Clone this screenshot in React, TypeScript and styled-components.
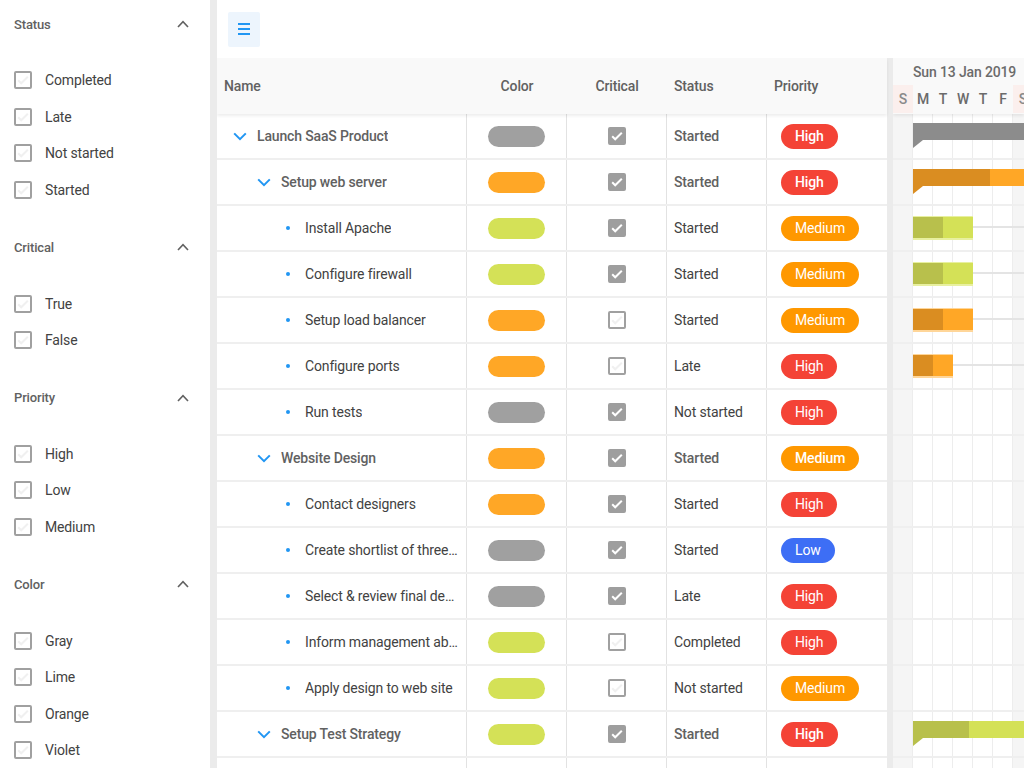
import React from 'react';
import styled, { createGlobalStyle, css } from 'styled-components';

const GlobalStyle = createGlobalStyle`
  html, body { margin: 0; padding: 0; height: 100%; }
  body {
    font-family: Roboto, "Noto Sans", "Liberation Sans", Arial, sans-serif;
    background: #ffffff;
    color: #424242;
    letter-spacing: -0.15px;
    -webkit-font-smoothing: antialiased;
  }
  * { box-sizing: border-box; }
`;

type ColorName = 'gray' | 'orange' | 'lime';
type Priority = 'High' | 'Medium' | 'Low';

const PILL: Record<ColorName, string> = { gray: '#a0a0a0', orange: '#ffa726', lime: '#d4e157' };
const BAR_LIGHT: Record<ColorName, string> = { gray: '#8c8c8c', orange: '#ffa726', lime: '#d4e157' };
const BAR_DARK: Record<ColorName, string> = { gray: '#8c8c8c', orange: '#da8d21', lime: '#b8c04c' };
const BAR_EDGE: Record<ColorName, string> = { gray: '#8c8c8c', orange: '#ffd699', lime: '#e8f0a0' };
const PRIORITY: Record<Priority, string> = { High: '#f44336', Medium: '#ff9800', Low: '#3d6ef5' };

const DAY = 20;

/* ---------- layout ---------- */
const Layout = styled.div`
  display: flex;
  width: 100vw;
  height: 100vh;
  overflow: hidden;
`;

const Sidebar = styled.aside`
  width: 210px;
  flex: none;
  background: #fff;
  overflow: hidden;
`;

const Divider = styled.div<{ $w: number }>`
  width: ${p => p.$w}px;
  flex: none;
  background: #ebebeb;
`;

const Main = styled.main`
  flex: 1;
  min-width: 0;
  display: flex;
  flex-direction: column;
  overflow: hidden;
`;

const Toolbar = styled.div`
  height: 58px;
  flex: none;
  display: flex;
  align-items: center;
  padding-left: 11px;
  background: #fff;
`;

const MenuButton = styled.button`
  width: 32px;
  height: 35px;
  border: 0;
  padding: 0;
  border-radius: 2px;
  background: #edf5fd;
  display: flex;
  align-items: center;
  justify-content: center;
`;

const Workspace = styled.div`
  flex: 1;
  min-height: 0;
  display: flex;
`;

const Table = styled.div`
  width: 670px;
  flex: none;
  display: flex;
  flex-direction: column;
`;

const Gantt = styled.div`
  flex: 1;
  min-width: 0;
  overflow: hidden;
  display: flex;
  flex-direction: column;
`;

/* ---------- sidebar ---------- */
const Section = styled.section`
  padding-bottom: 15px;
`;

const SectionHeader = styled.div`
  height: 48px;
  display: flex;
  align-items: center;
  justify-content: space-between;
  padding: 0 21px 0 14px;
  font-size: 13px;
  font-weight: 500;
  color: #616161;
`;

const OptionList = styled.div`
  padding-top: 14px;
`;

const Option = styled.label`
  height: 36.6px;
  display: flex;
  align-items: center;
  gap: 13px;
  padding-left: 14px;
  font-size: 14px;
  color: #424242;
`;

const Box = styled.span<{ $checked?: boolean }>`
  width: 18px;
  height: 18px;
  flex: none;
  border-radius: 2px;
  display: inline-flex;
  align-items: center;
  justify-content: center;
  ${p =>
    p.$checked
      ? css`background: #9e9e9e; border: 2px solid #9e9e9e;`
      : css`background: #fff; border: 2px solid #a0a0a0;`}
`;

/* ---------- table ---------- */
const columns = '250px 100px 100px 100px 120px';

const HeaderRow = styled.div`
  display: grid;
  grid-template-columns: ${columns};
  height: 56px;
  flex: none;
  background: #f9f9f9;
  box-shadow: 0 2px 3px rgba(0, 0, 0, 0.07);
  position: relative;
  z-index: 1;
`;

const HeaderCell = styled.div<{ $center?: boolean }>`
  display: flex;
  align-items: center;
  justify-content: ${p => (p.$center ? 'center' : 'flex-start')};
  padding-left: ${p => (p.$center ? 0 : 7)}px;
  font-size: 14px;
  font-weight: 500;
  color: #616161;
`;

const Row = styled.div`
  display: grid;
  grid-template-columns: ${columns};
  height: 46px;
  flex: none;
  border-bottom: 2px solid #efefef;
`;

const Cell = styled.div<{ $center?: boolean; $last?: boolean; $pad?: number; $bold?: boolean }>`
  display: flex;
  align-items: center;
  min-width: 0;
  justify-content: ${p => (p.$center ? 'center' : 'flex-start')};
  padding-left: ${p => p.$pad ?? 0}px;
  border-right: ${p => (p.$last ? '0' : '1px solid #e2e2e2')};
  font-size: 14px;
  font-weight: ${p => (p.$bold ? 500 : 400)};
  color: ${p => (p.$bold ? '#616161' : '#424242')};
`;

const NameCell = styled(Cell)<{ $level: number }>`
  padding-left: ${p => 16 + p.$level * 24}px;
  padding-right: 6px;
`;

const Toggle = styled.span`
  width: 24px;
  flex: none;
  display: flex;
  align-items: center;
`;

const Dot = styled.span`
  width: 4px;
  height: 4px;
  margin-left: 5px;
  border-radius: 50%;
  background: #2196f3;
`;

const NameText = styled.span`
  overflow: hidden;
  white-space: nowrap;
  text-overflow: ellipsis;
  min-width: 0;
`;

const ColorPill = styled.span<{ $color: ColorName }>`
  width: 57px;
  height: 21px;
  border-radius: 11px;
  background: ${p => PILL[p.$color]};
`;

const PriorityPill = styled.span<{ $priority: Priority; $bold?: boolean }>`
  height: 25px;
  padding: 0 14px;
  border-radius: 13px;
  display: inline-flex;
  align-items: center;
  background: ${p => PRIORITY[p.$priority]};
  color: #fff;
  font-size: 14px;
  font-weight: ${p => (p.$bold ? 500 : 400)};
`;

/* ---------- gantt ---------- */
const GanttHeader = styled.div`
  height: 56px;
  flex: none;
  background: #f9f9f9;
  box-shadow: 0 2px 3px rgba(0, 0, 0, 0.07);
  position: relative;
  z-index: 1;
  display: flex;
  flex-direction: column;
`;

const WeekLabel = styled.div`
  height: 27px;
  display: flex;
  align-items: center;
  padding-left: 20px;
  font-size: 14px;
  font-weight: 500;
  color: #6b6b6b;
  white-space: nowrap;
`;

const DayRow = styled.div`
  display: flex;
  height: 28px;
`;

const DayLabel = styled.div<{ $weekend?: boolean }>`
  width: ${DAY}px;
  flex: none;
  display: flex;
  align-items: center;
  justify-content: center;
  font-size: 14px;
  font-weight: 500;
  color: ${p => (p.$weekend ? '#8a8a8a' : '#6b6b6b')};
  background: ${p => (p.$weekend ? '#fbefed' : 'transparent')};
`;

const GanttRow = styled.div`
  position: relative;
  display: flex;
  height: 46px;
  flex: none;
  border-bottom: 2px solid #efefef;
`;

const DayCell = styled.div<{ $weekend?: boolean }>`
  width: ${DAY}px;
  flex: none;
  border-right: 1px solid #ededed;
  background: ${p => (p.$weekend ? '#f5f5f5' : '#fff')};
`;

const Bar = styled.div<{ $color: ColorName; $summary?: boolean }>`
  position: absolute;
  display: flex;
  top: ${p => (p.$summary ? 9 : 10)}px;
  height: ${p => (p.$summary ? 17 : 24)}px;
  background: ${p => BAR_LIGHT[p.$color]};
  ${p =>
    !p.$summary &&
    css`
      border-top: 1px solid ${BAR_EDGE[p.$color]};
      border-bottom: 2px solid ${BAR_EDGE[p.$color]};
    `}
  ${p =>
    p.$summary &&
    css`
      &::after {
        content: '';
        position: absolute;
        left: 0;
        top: 100%;
        width: 10px;
        height: 8px;
        background: ${BAR_DARK[p.$color]};
        clip-path: polygon(0 0, 100% 0, 0 100%);
      }
    `}
`;

const Progress = styled.div<{ $color: ColorName }>`
  height: 100%;
  flex: none;
  background: ${p => BAR_DARK[p.$color]};
`;

const Link = styled.div`
  position: absolute;
  top: 20px;
  right: 0;
  height: 2px;
  background: #e4e4e4;
`;

/* ---------- icons ---------- */
const Check = ({ color }: { color: string }) => (
  <svg width="14" height="14" viewBox="0 0 14 14">
    <path d="M2.2 7.3l3 3L11.8 3.7" fill="none" stroke={color} strokeWidth="2" />
  </svg>
);

const ChevronDown = () => (
  <svg width="14" height="9" viewBox="0 0 14 9">
    <path d="M1.2 1.4L7 7.2l5.8-5.8" fill="none" stroke="#2196f3" strokeWidth="2" />
  </svg>
);

const ChevronUp = () => (
  <svg width="12" height="8" viewBox="0 0 12 8">
    <path d="M1 7l5-5.3L11 7" fill="none" stroke="#616161" strokeWidth="1.6" />
  </svg>
);

const Hamburger = () => (
  <svg width="12" height="12" viewBox="0 0 12 12">
    <path d="M0 1h12M0 6h12M0 11h12" stroke="#2196f3" strokeWidth="2" />
  </svg>
);

const CheckBox = ({ checked }: { checked?: boolean }) => (
  <Box $checked={checked}>
    <Check color={checked ? '#ffffff' : '#f0f0f0'} />
  </Box>
);

/* ---------- data ---------- */
const filters: { title: string; options: string[] }[] = [
  { title: 'Status', options: ['Completed', 'Late', 'Not started', 'Started'] },
  { title: 'Critical', options: ['True', 'False'] },
  { title: 'Priority', options: ['High', 'Low', 'Medium'] },
  { title: 'Color', options: ['Gray', 'Lime', 'Orange', 'Violet'] },
];

type Task = {
  name: string;
  level: number;
  parent?: boolean;
  color: ColorName;
  critical: boolean;
  status: string;
  priority: Priority;
  bar?: { start: number; width: number; progress: number; summary?: boolean; link?: boolean };
};

const tasks: Task[] = [
  { name: 'Launch SaaS Product', level: 0, parent: true, color: 'gray', critical: true, status: 'Started', priority: 'High', bar: { start: 1, width: 220, progress: 220, summary: true } },
  { name: 'Setup web server', level: 1, parent: true, color: 'orange', critical: true, status: 'Started', priority: 'High', bar: { start: 1, width: 220, progress: 77, summary: true } },
  { name: 'Install Apache', level: 2, color: 'lime', critical: true, status: 'Started', priority: 'Medium', bar: { start: 1, width: 60, progress: 30, link: true } },
  { name: 'Configure firewall', level: 2, color: 'lime', critical: true, status: 'Started', priority: 'Medium', bar: { start: 1, width: 60, progress: 30, link: true } },
  { name: 'Setup load balancer', level: 2, color: 'orange', critical: false, status: 'Started', priority: 'Medium', bar: { start: 1, width: 60, progress: 30, link: true } },
  { name: 'Configure ports', level: 2, color: 'orange', critical: false, status: 'Late', priority: 'High', bar: { start: 1, width: 40, progress: 20, link: true } },
  { name: 'Run tests', level: 2, color: 'gray', critical: true, status: 'Not started', priority: 'High' },
  { name: 'Website Design', level: 1, parent: true, color: 'orange', critical: true, status: 'Started', priority: 'Medium' },
  { name: 'Contact designers', level: 2, color: 'orange', critical: true, status: 'Started', priority: 'High' },
  { name: 'Create shortlist of three designers', level: 2, color: 'gray', critical: true, status: 'Started', priority: 'Low' },
  { name: 'Select & review final design', level: 2, color: 'gray', critical: true, status: 'Late', priority: 'High' },
  { name: 'Inform management about decision', level: 2, color: 'lime', critical: false, status: 'Completed', priority: 'High' },
  { name: 'Apply design to web site', level: 2, color: 'lime', critical: false, status: 'Not started', priority: 'Medium' },
  { name: 'Setup Test Strategy', level: 1, parent: true, color: 'lime', critical: true, status: 'Started', priority: 'High', bar: { start: 1, width: 220, progress: 56, summary: true } },
  { name: 'Hire QA staff', level: 2, color: 'lime', critical: true, status: 'Started', priority: 'Low', bar: { start: 1, width: 120, progress: 40 } },
];

const days = ['S', 'M', 'T', 'W', 'T', 'F', 'S', 'S', 'M'];
const isWeekend = (i: number) => i % 7 === 0 || i % 7 === 6;

export default function App() {
  return (
    <>
      <GlobalStyle />
      <Layout>
        <Sidebar>
          {filters.map(f => (
            <Section key={f.title}>
              <SectionHeader>
                <span>{f.title}</span>
                <ChevronUp />
              </SectionHeader>
              <OptionList>
                {f.options.map(o => (
                  <Option key={o}>
                    <CheckBox />
                    <span>{o}</span>
                  </Option>
                ))}
              </OptionList>
            </Section>
          ))}
        </Sidebar>
        <Divider $w={7} />
        <Main>
          <Toolbar>
            <MenuButton aria-label="menu">
              <Hamburger />
            </MenuButton>
          </Toolbar>
          <Workspace>
            <Table>
              <HeaderRow>
                <HeaderCell>Name</HeaderCell>
                <HeaderCell $center>Color</HeaderCell>
                <HeaderCell $center>Critical</HeaderCell>
                <HeaderCell>Status</HeaderCell>
                <HeaderCell>Priority</HeaderCell>
              </HeaderRow>
              {tasks.map((t, i) => (
                <Row key={i}>
                  <NameCell $level={t.level} $bold={t.parent}>
                    <Toggle>{t.parent ? <ChevronDown /> : <Dot />}</Toggle>
                    <NameText>{t.name}</NameText>
                  </NameCell>
                  <Cell $center>
                    <ColorPill $color={t.color} />
                  </Cell>
                  <Cell $center>
                    <CheckBox checked={t.critical} />
                  </Cell>
                  <Cell $pad={7} $bold={t.parent}>{t.status}</Cell>
                  <Cell $pad={14} $last>
                    <PriorityPill $priority={t.priority} $bold={t.parent}>{t.priority}</PriorityPill>
                  </Cell>
                </Row>
              ))}
            </Table>
            <Divider $w={6} />
            <Gantt>
              <GanttHeader>
                <WeekLabel>Sun 13 Jan 2019</WeekLabel>
                <DayRow>
                  {days.map((d, i) => (
                    <DayLabel key={i} $weekend={isWeekend(i)}>{d}</DayLabel>
                  ))}
                </DayRow>
              </GanttHeader>
              {tasks.map((t, i) => (
                <GanttRow key={i}>
                  {days.map((_, d) => (
                    <DayCell key={d} $weekend={isWeekend(d)} />
                  ))}
                  {t.bar && t.bar.link && (
                    <Link style={{ left: t.bar.start * DAY + t.bar.width }} />
                  )}
                  {t.bar && (
                    <Bar
                      $color={t.color}
                      $summary={t.bar.summary}
                      style={{ left: t.bar.start * DAY, width: t.bar.width }}
                    >
                      <Progress $color={t.color} style={{ width: t.bar.progress }} />
                    </Bar>
                  )}
                </GanttRow>
              ))}
            </Gantt>
          </Workspace>
        </Main>
      </Layout>
    </>
  );
}
